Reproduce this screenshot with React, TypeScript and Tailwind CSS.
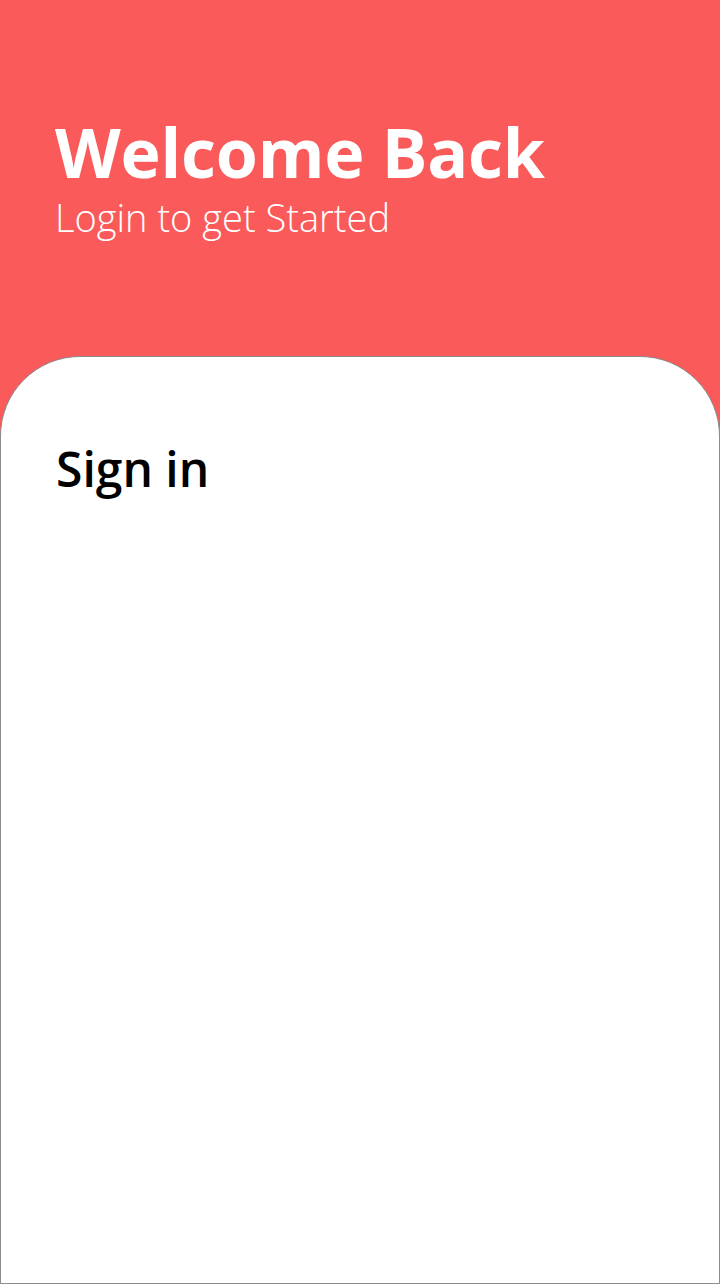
export default function App() {
  return (
    <div
      className="flex h-[1284px] w-[720px] flex-col bg-[#fa5a5a]"
      style={{ fontFamily: '"Open Sans", "Noto Sans", sans-serif' }}
    >
      <div className="h-[356px] shrink-0 px-[55px] pt-[116px]">
        <h1 className="text-[68px] font-bold leading-[72px] tracking-[-0.2px] text-white">Welcome Back</h1>
        <p className="mt-[7px] text-[38px] font-light leading-[44px] text-white">Login to get Started</p>
      </div>
      <div className="flex-1 rounded-t-[80px] border border-[#8c8a8c] bg-white px-[55px] pt-[84px]">
        <h2 className="text-[48px] font-semibold leading-[56px] text-black">Sign in</h2>
      </div>
    </div>
  );
}
